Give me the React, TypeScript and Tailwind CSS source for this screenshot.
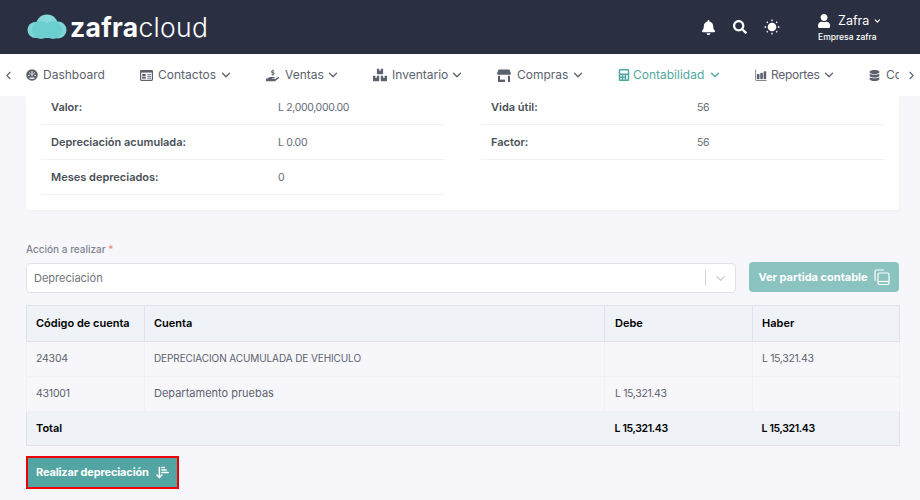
import { ChevronDown, ChevronLeft, ChevronRight, ArrowDownNarrowWide } from 'lucide-react'
import { FaBell, FaSearch, FaUser, FaHandHoldingUsd, FaBoxes, FaCalculator, FaDatabase } from 'react-icons/fa'
import { IoBarChart } from 'react-icons/io5'

const font = { fontFamily: 'Inter' }

function GaugeIcon() {
  return (
    <svg width="12" height="12" viewBox="0 0 12 12">
      <circle cx="6" cy="6" r="5.8" fill="currentColor" />
      <path d="M6 2.2v5M3.2 3.6l1.6 1.6M8.8 3.6 7.2 5.2M2 6.5h1.5M8.5 6.5H10" stroke="#fff" strokeWidth="1" />
      <path d="M3.5 9.2h5" stroke="#fff" strokeWidth="1.3" />
    </svg>
  )
}

function CardIcon() {
  return (
    <svg width="13" height="11" viewBox="0 0 13 11">
      <rect x="0.6" y="0.6" width="11.8" height="9.8" rx="0.8" fill="#fff" stroke="currentColor" strokeWidth="1.2" />
      <rect x="0.6" y="0.6" width="11.8" height="2" fill="currentColor" />
      <rect x="2.2" y="4" width="3.4" height="2.2" fill="currentColor" />
      <rect x="2" y="6.8" width="3.8" height="1.8" fill="currentColor" />
      <path d="M7.4 4.6h3.6M7.4 6.4h3.6M7.4 8.2h3.6" stroke="currentColor" strokeWidth="0.9" />
    </svg>
  )
}

function StoreIcon() {
  return (
    <svg width="14" height="13" viewBox="0 0 14 13" fill="currentColor">
      <path d="M1.6 0.5h10.8L14 4.6c0 .8-.7 1.2-1.4 1.2H1.4C.7 5.8 0 5.4 0 4.6z" />
      <path d="M1 6.8h2V13H1zM11 6.8h2V13h-2z" />
      <path d="M3 10.6h5V13H3z" />
    </svg>
  )
}

function SunIcon() {
  return (
    <svg width="16" height="16" viewBox="0 0 16 16">
      <circle cx="8" cy="8" r="4.3" fill="#fff" />
      <path d="M8 .6v1.6M8 13.8v1.6M.6 8h1.6M13.8 8h1.6M2.8 2.8l1 1M12.2 12.2l1 1M2.8 13.2l1-1M12.2 3.8l1-1" stroke="#fff" strokeWidth="1.3" />
    </svg>
  )
}

const navItems = [
  { label: 'Dashboard', icon: <GaugeIcon />, width: 'w-[78px]', slot: 'w-[17px]', caret: false },
  { label: 'Contactos', icon: <CardIcon />, width: 'w-[90px]', slot: 'w-[18px]', caret: true },
  { label: 'Ventas', icon: <FaHandHoldingUsd size={13} />, width: 'w-[71px]', slot: 'w-[19px]', caret: true },
  { label: 'Inventario', icon: <FaBoxes size={14} />, width: 'w-[88px]', slot: 'w-[19px]', caret: true },
  { label: 'Compras', icon: <StoreIcon />, width: 'w-[85px]', slot: 'w-[20px]', caret: true },
  { label: 'Contabilidad', icon: <FaCalculator size={12} />, width: 'w-[101px]', slot: 'w-[15px]', caret: true, active: true },
  { label: 'Reportes', icon: <IoBarChart size={12} />, width: 'w-[78px]', slot: 'w-[16px]', caret: true, tight: true },
]

const detailRows = [
  [
    ['Valor:', 'L 2,000,000.00'],
    ['Depreciación acumulada:', 'L 0.00'],
    ['Meses depreciados:', '0'],
  ],
  [
    ['Vida útil:', '56'],
    ['Factor:', '56'],
  ],
]

function Logo() {
  return (
    <div className="flex items-center gap-[3px]">
      <svg width="40" height="26" viewBox="0 0 40 26">
        <circle cx="8.5" cy="16" r="8" fill="#7fd6d6" />
        <circle cx="31" cy="16" r="8.5" fill="#7fd6d6" />
        <circle cx="20" cy="11.5" r="11" fill="#86dad9" />
        <rect x="8" y="16" width="23" height="8" fill="#7fd6d6" />
        <circle cx="14" cy="16" r="9" fill="#6ccfcf" />
        <circle cx="26" cy="16" r="9" fill="#6ccfcf" />
      </svg>
      <div className="flex items-baseline text-[26.5px] leading-none text-white tracking-[0.3px]">
        <span className="font-bold">zafra</span>
        <span className="font-light">cloud</span>
      </div>
    </div>
  )
}

function CopyIcon() {
  return (
    <svg width="16" height="16" viewBox="0 0 16 16" fill="none" stroke="currentColor" strokeWidth="1.2">
      <path d="M1 12V2.5C1 1.6 1.6 1 2.5 1H10" />
      <rect x="4" y="4" width="11" height="11.5" rx="1.5" />
      <path d="M4 12.5h11" />
    </svg>
  )
}

export default function App() {
  return (
    <div className="w-[920px] h-[500px] overflow-hidden flex flex-col bg-[#f7f7fb]" style={font}>
      {/* Top bar */}
      <header className="h-[54px] shrink-0 bg-[#2a3042] flex items-center justify-between pl-[27px] pr-[38px]">
        <Logo />
        <div className="flex items-center text-white">
          <FaBell size={15} className="mr-[17px]" />
          <FaSearch size={14} className="mr-[17px]" />
          <SunIcon />
          <div className="w-[64px] ml-[38px]">
            <div className="flex items-center">
              <FaUser size={14} />
              <span className="ml-[8px] text-[12.5px] leading-[16px]">Zafra</span>
              <ChevronDown size={10} strokeWidth={3} className="ml-[4px]" />
            </div>
            <div className="mt-[3px] text-[8.5px] leading-[10px] font-medium whitespace-nowrap">Empresa zafra</div>
          </div>
        </div>
      </header>

      {/* Menu */}
      <nav className="h-[42px] shrink-0 bg-white flex items-center relative overflow-hidden text-[#5b626e] text-[12px]">
        <ChevronLeft size={13} className="ml-[2px] mr-[11px] shrink-0" />
        <div className="flex items-center gap-[36px] whitespace-nowrap">
          {navItems.map((item) => (
            <div key={item.label} className={`flex items-center shrink-0 ${item.width} ${item.active ? 'text-[#52a7a2]' : ''}`}>
              <span className={`shrink-0 flex ${item.slot}`}>{item.icon}</span>
              <span className={item.tight ? 'tracking-[-0.3px]' : ''}>{item.label}</span>
              {item.caret && <ChevronDown size={14} strokeWidth={2.2} className="ml-auto -mr-[3px]" />}
            </div>
          ))}
          <div className="flex items-center shrink-0 w-[30px] overflow-hidden">
            <FaDatabase size={11} className="shrink-0" />
            <span className="ml-[6px]">Co</span>
          </div>
        </div>
        <div className="ml-auto mr-[2px] shrink-0 bg-white">
          <ChevronRight size={13} />
        </div>
      </nav>

      <main className="flex-1 pl-[26px] pr-[21px]">
        {/* Detail card */}
        <section className="h-[114px] bg-white rounded-b-[4px] px-[15px] flex gap-[37px] shadow-[0_1px_3px_rgba(0,0,0,0.03)]">
          {detailRows.map((col, i) => (
            <div key={i} className="w-[403px]">
              {col.map(([label, value], j) => (
                <div key={label} className={`flex items-center border-b border-[#f1f2f5] pl-[10px] text-[11px] ${j === 0 ? 'h-[29px] pb-[6px]' : 'h-[35px]'}`}>
                  <span className={`font-semibold text-[#495057] ${i === 0 ? 'w-[227px]' : 'w-[206px]'}`}>{label}</span>
                  <span className="mt-[1px] text-[#626b76] text-[10.5px] tracking-[-0.35px]">{value}</span>
                </div>
              ))}
            </div>
          ))}
        </section>

        {/* Action */}
        <div className="mt-[33px] text-[10px] leading-[12px] font-medium text-[#7d8590]">
          Acción a realizar <span className="text-[#f08a8a]">*</span>
        </div>
        <div className="mt-[8px] flex items-start gap-[13px]">
          <div className="w-[710px] h-[30px] bg-white border border-[#dfe2e8] rounded-[4px] flex items-center pl-[7px] text-[11px] text-[#6c757d]">
            <span>Depreciación</span>
            <div className="ml-auto flex items-center">
              <span className="w-px h-[16px] bg-[#d3d6db]" />
              <ChevronDown size={15} className="mx-[7px] text-[#c5c8cd]" />
            </div>
          </div>
          <button className="w-[150px] h-[30px] -mt-px rounded-[4px] bg-[#8ac3c0] text-white text-[11px] font-bold flex items-center justify-center gap-[6px]">
            Ver partida contable
            <CopyIcon />
          </button>
        </div>

        {/* Entries table */}
        <table className="mt-[12px] w-[873px] table-fixed border-collapse text-[11px] text-[#5b626e]">
          <colgroup>
            <col className="w-[118px]" />
            <col className="w-[460px]" />
            <col className="w-[148px]" />
            <col className="w-[147px]" />
          </colgroup>
          <thead>
            <tr className="h-[36px] bg-[#eff2f7] text-left text-black">
              <th className="border border-[#dfe2e8] pl-[9px] font-semibold">Código de cuenta</th>
              <th className="border border-[#dfe2e8] pl-[9px] font-semibold">Cuenta</th>
              <th className="border border-[#dfe2e8] pl-[10px] font-semibold">Debe</th>
              <th className="border border-[#dfe2e8] pl-[9px] font-semibold">Haber</th>
            </tr>
          </thead>
          <tbody>
            <tr className="h-[35px]">
              <td className="border border-[#eff1f5] pl-[9px] text-[10.5px] tracking-[-0.2px]">24304</td>
              <td className="border border-[#eff1f5] pl-[9px] pb-[2px] text-[10px] tracking-[-0.1px]">DEPRECIACION ACUMULADA DE VEHICULO</td>
              <td className="border border-[#eff1f5] pl-[10px]"></td>
              <td className="border border-[#eff1f5] pl-[9px] text-[10.5px] tracking-[-0.35px]">L 15,321.43</td>
            </tr>
            <tr className="h-[35px]">
              <td className="border border-[#eff1f5] pl-[9px] text-[10.5px] tracking-[-0.2px]">431001</td>
              <td className="border border-[#eff1f5] pl-[9px] pb-[2px]">Departamento pruebas</td>
              <td className="border border-[#eff1f5] pl-[10px] text-[10.5px] tracking-[-0.35px]">L 15,321.43</td>
              <td className="border border-[#eff1f5] pl-[9px]"></td>
            </tr>
            <tr className="h-[34px] bg-[#eff2f7] text-black font-semibold border-b border-x border-[#dfe2e8]">
              <td className="pl-[9px]">Total</td>
              <td></td>
              <td className="pl-[10px] pt-[1px] text-[10.5px] tracking-[-0.35px]">L 15,321.43</td>
              <td className="pl-[9px] pt-[1px] text-[10.5px] tracking-[-0.35px]">L 15,321.43</td>
            </tr>
          </tbody>
        </table>

        {/* Main action, outlined in red in the capture */}
        <button className="mt-[10px] w-[153px] h-[33px] bg-[#52a5a2] border-2 border-[#f00000] pl-[8px] text-white text-[11px] font-bold tracking-[-0.15px] flex items-center gap-[6px] whitespace-nowrap">
          Realizar depreciación
          <ArrowDownNarrowWide size={15} strokeWidth={2.4} />
        </button>
      </main>
    </div>
  )
}
